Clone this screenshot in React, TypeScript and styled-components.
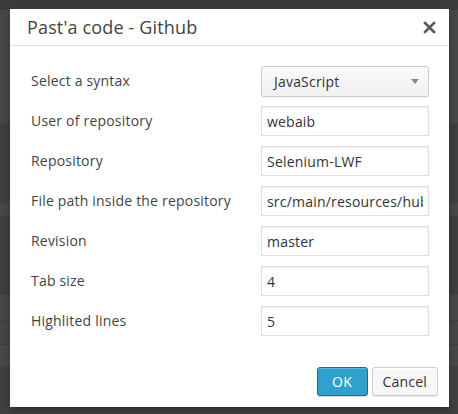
import React from "react";
import styled, { createGlobalStyle } from "styled-components";

const Global = createGlobalStyle`
  html, body { margin: 0; padding: 0; }
  body {
    width: 458px;
    height: 414px;
    overflow: hidden;
    font-family: "Open Sans", "Noto Sans", sans-serif;
    background: linear-gradient(
      to bottom,
      #3b3b3b 0px, #3b3b3b 10px,
      #474747 10px, #474747 123px,
      #3f3f3f 123px, #3f3f3f 203px,
      #474747 203px, #474747 216px,
      #3e3e3e 216px, #3e3e3e 295px,
      #484848 295px, #484848 320px,
      #3d3d3d 320px, #3d3d3d 321px,
      #454545 321px, #454545 344px,
      #3d3d3d 344px, #3d3d3d 345px,
      #474747 345px, #474747 366px,
      #404040 366px, #404040 414px
    );
  }
`;

const Page = styled.div`
  padding: 9px 0 0 10px;
`;

const Dialog = styled.div`
  width: 439px;
  height: 398px;
  background: #fff;
  box-shadow: 0 3px 6px rgba(0, 0, 0, 0.3);
  display: flex;
  flex-direction: column;
  box-sizing: border-box;
`;

const Header = styled.div`
  height: 37px;
  box-sizing: border-box;
  border-bottom: 1px solid #dcdcdc;
  display: flex;
  align-items: center;
  justify-content: space-between;
  padding: 0 13px 0 17px;
`;

const Title = styled.div`
  font-size: 18px;
  color: #444;
  line-height: 22px;
  letter-spacing: 0.15px;
`;

const Close = styled.button`
  border: 0;
  background: none;
  padding: 0;
  width: 14px;
  height: 14px;
  display: flex;
  align-items: center;
  justify-content: center;
  cursor: pointer;
  margin-top: 1px;
`;

const Body = styled.div`
  padding: 20px 20px 20px 21px;
  display: flex;
  flex-direction: column;
  gap: 10px;
`;

const Row = styled.div`
  display: flex;
  align-items: center;
  justify-content: space-between;
  height: 30px;
`;

const Label = styled.label`
  font-size: 14px;
  color: #444;
  line-height: 20px;
  letter-spacing: 0.2px;
`;

const Input = styled.input`
  width: 168px;
  height: 30px;
  box-sizing: border-box;
  border: 1px solid #ddd;
  box-shadow: inset 0 1px 2px rgba(0, 0, 0, 0.07);
  padding: 0 5px;
  font-family: "Open Sans", "Noto Sans", sans-serif;
  font-size: 14px;
  letter-spacing: 0.2px;
  color: #333;
  background: #fff;
  outline: none;
  margin: 0;
`;

const Select = styled.div`
  width: 168px;
  height: 31px;
  box-sizing: border-box;
  border: 1px solid #ccc;
  border-radius: 3px;
  background: linear-gradient(#fafafa, #f1f1f1);
  box-shadow: 0 1px 0 rgba(0, 0, 0, 0.06);
  display: flex;
  align-items: center;
  justify-content: space-between;
  padding: 0 9px 0 12px;
  font-size: 14px;
  letter-spacing: 0.2px;
  color: #333;
  margin-top: 1px;
`;

const Caret = styled.span`
  width: 0;
  height: 0;
  border-left: 4px solid transparent;
  border-right: 4px solid transparent;
  border-top: 5px solid #888;
`;

const Footer = styled.div`
  display: flex;
  justify-content: flex-end;
  gap: 4px;
  padding: 0 11px 0 0;
  margin-top: auto;
  margin-bottom: 11px;
`;

const Button = styled.button<{ $primary?: boolean }>`
  height: 29px;
  box-sizing: border-box;
  border-radius: 3px;
  font-family: "Open Sans", "Noto Sans", sans-serif;
  font-size: 14px;
  letter-spacing: 0.2px;
  padding: 0 10px;
  border: 1px solid ${(p) => (p.$primary ? "#0074a2" : "#ccc")};
  background: ${(p) => (p.$primary ? "#2ea2cc" : "#f7f7f7")};
  color: ${(p) => (p.$primary ? "#fff" : "#333")};
  box-shadow: ${(p) =>
    p.$primary
      ? "inset 0 1px 0 rgba(120,200,230,0.5), 0 1px 0 rgba(0,0,0,0.15)"
      : "inset 0 1px 0 #fff, 0 1px 0 rgba(0,0,0,0.08)"};
  cursor: pointer;
  min-width: ${(p) => (p.$primary ? "51px" : "66px")};
`;

const fields = [
  { label: "User of repository", value: "webaib" },
  { label: "Repository", value: "Selenium-LWF" },
  { label: "File path inside the repository", value: "src/main/resources/hub" },
  { label: "Revision", value: "master" },
  { label: "Tab size", value: "4" },
  { label: "Highlited lines", value: "5" },
];

export default function App() {
  return (
    <>
      <Global />
      <Page>
        <Dialog>
          <Header>
            <Title>Past'a code - Github</Title>
            <Close aria-label="Close">
              <svg width="13" height="13" viewBox="0 0 13 13">
                <path
                  d="M2 2 L11 11 M11 2 L2 11"
                  stroke="#5a5a5a"
                  strokeWidth="2.6"
                  strokeLinecap="square"
                />
              </svg>
            </Close>
          </Header>
          <Body>
            <Row>
              <Label>Select a syntax</Label>
              <Select>
                <span>JavaScript</span>
                <Caret />
              </Select>
            </Row>
            {fields.map((f) => (
              <Row key={f.label}>
                <Label>{f.label}</Label>
                <Input defaultValue={f.value} />
              </Row>
            ))}
          </Body>
          <Footer>
            <Button $primary>OK</Button>
            <Button>Cancel</Button>
          </Footer>
        </Dialog>
      </Page>
    </>
  );
}
